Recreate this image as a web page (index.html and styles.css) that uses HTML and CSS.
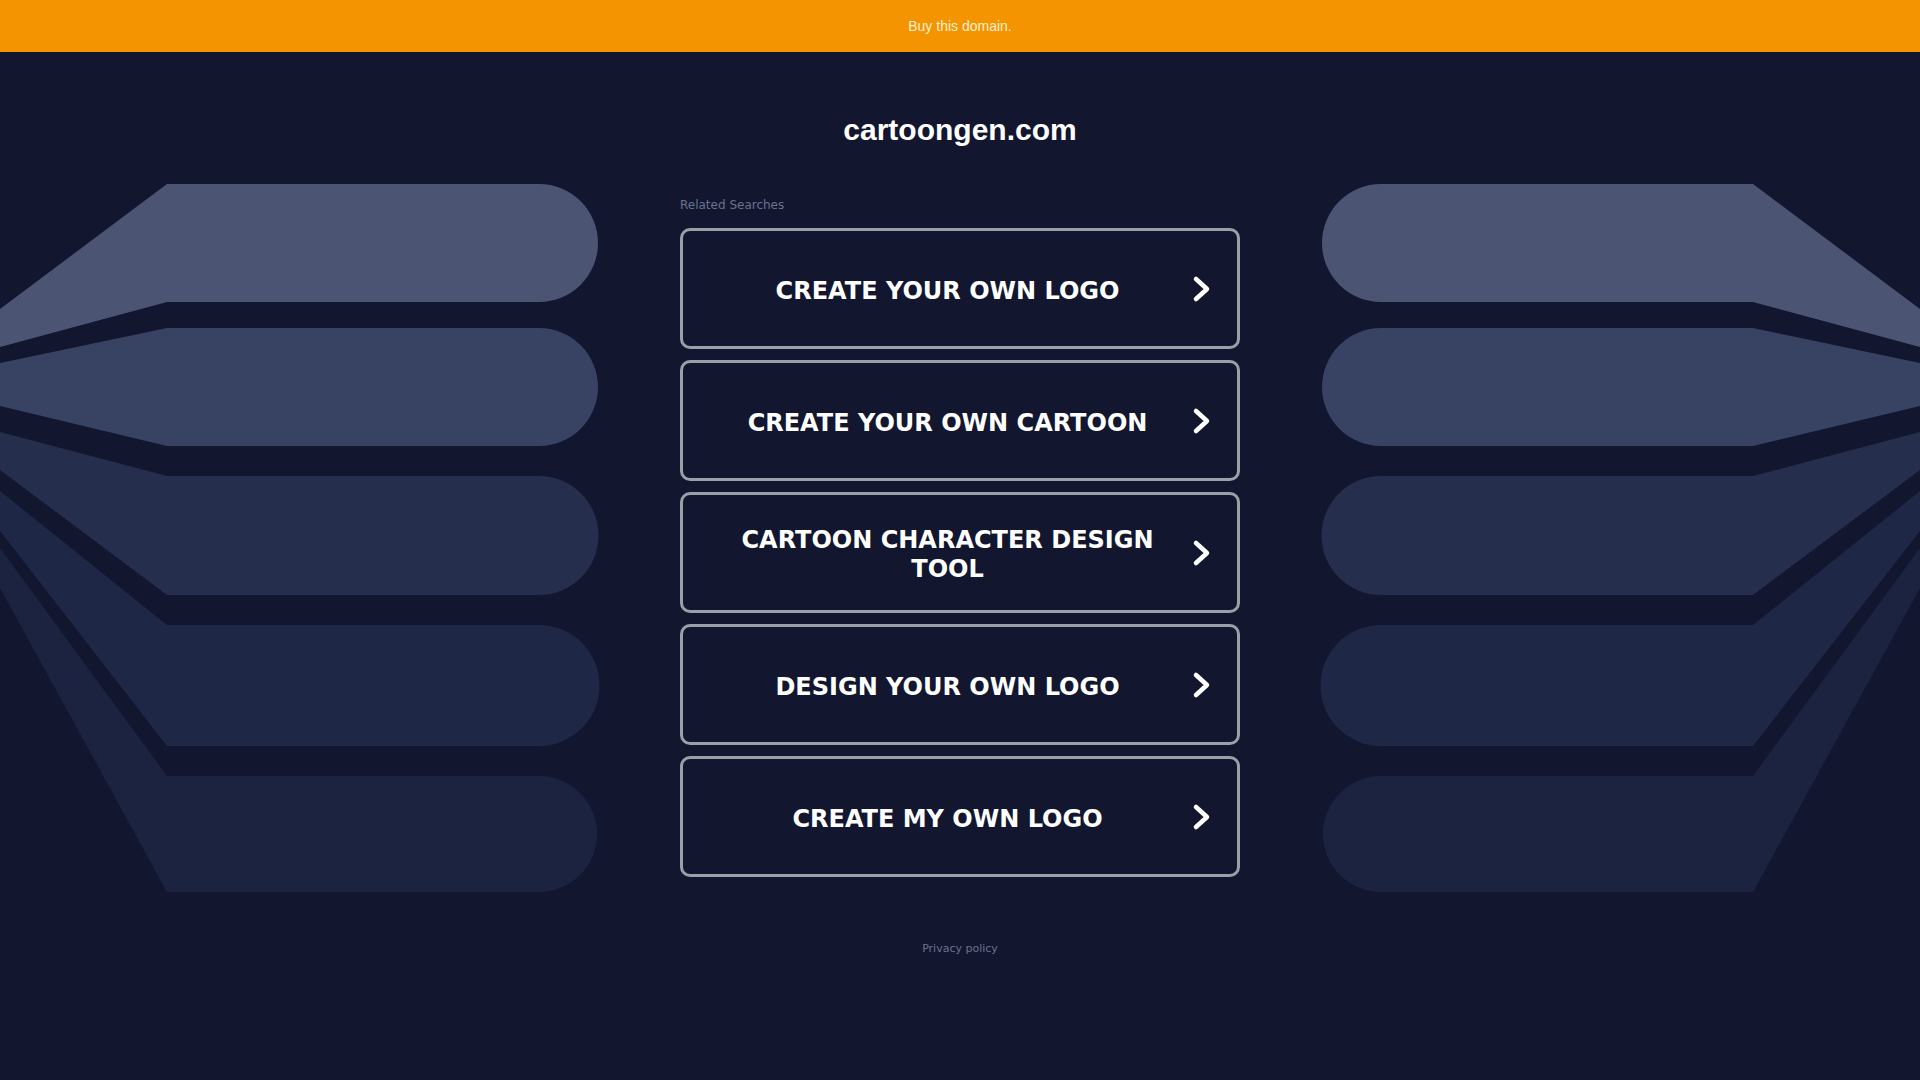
FILE: index.html
```html
<!DOCTYPE html>
<html lang="en">
<head>
    <meta charset="UTF-8">
    <meta name="viewport" content="width=device-width, initial-scale=1.0">
    <title>cartoongen.com</title>
    <link rel="stylesheet" href="styles.css">
</head>
<body>
    <div class="topbar">
        <a href="#">Buy this domain.</a>
    </div>

    <h1 class="domain">cartoongen.com</h1>

    <div class="stage">
        <!-- fan of rounded bars, mirrored on the right -->
        <svg class="fan" viewBox="0 0 600 710" width="600" height="710" aria-hidden="true">
            <path fill="#4b5573" d="M0 125 L167 0 H539 A59 59 0 0 1 539 118 H167 L0 163 Z"/>
            <path fill="#384262" d="M0 179 L167 144 H539 A59 59 0 0 1 539 262 H167 L0 222 Z"/>
            <path fill="#262e4d" d="M0 248 L167 292 H539 A59.5 59.5 0 0 1 539 411 H167 L0 286 Z"/>
            <path fill="#1f2746" d="M0 307 L167 441 H539 A60.5 60.5 0 0 1 539 562 H167 L0 347 Z"/>
            <path fill="#1c2341" d="M0 364 L167 592 H539 A58 58 0 0 1 539 708 H167 L0 404 Z"/>
        </svg>

        <main class="searches">
            <p class="searches-title">Related Searches</p>
            <ul class="search-list">
                <li><a href="#" class="search-link"><span>CREATE YOUR OWN LOGO</span><svg class="chevron" viewBox="0 0 20 28" width="20" height="28"><polyline points="4,4 15,14 4,24"/></svg></a></li>
                <li><a href="#" class="search-link"><span>CREATE YOUR OWN CARTOON</span><svg class="chevron" viewBox="0 0 20 28" width="20" height="28"><polyline points="4,4 15,14 4,24"/></svg></a></li>
                <li><a href="#" class="search-link"><span>CARTOON CHARACTER DESIGN TOOL</span><svg class="chevron" viewBox="0 0 20 28" width="20" height="28"><polyline points="4,4 15,14 4,24"/></svg></a></li>
                <li><a href="#" class="search-link"><span>DESIGN YOUR OWN LOGO</span><svg class="chevron" viewBox="0 0 20 28" width="20" height="28"><polyline points="4,4 15,14 4,24"/></svg></a></li>
                <li><a href="#" class="search-link"><span>CREATE MY OWN LOGO</span><svg class="chevron" viewBox="0 0 20 28" width="20" height="28"><polyline points="4,4 15,14 4,24"/></svg></a></li>
            </ul>
        </main>

        <svg class="fan fan-right" viewBox="0 0 600 710" width="600" height="710" aria-hidden="true">
            <path fill="#4b5573" d="M0 125 L167 0 H539 A59 59 0 0 1 539 118 H167 L0 163 Z"/>
            <path fill="#384262" d="M0 179 L167 144 H539 A59 59 0 0 1 539 262 H167 L0 222 Z"/>
            <path fill="#262e4d" d="M0 248 L167 292 H539 A59.5 59.5 0 0 1 539 411 H167 L0 286 Z"/>
            <path fill="#1f2746" d="M0 307 L167 441 H539 A60.5 60.5 0 0 1 539 562 H167 L0 347 Z"/>
            <path fill="#1c2341" d="M0 364 L167 592 H539 A58 58 0 0 1 539 708 H167 L0 404 Z"/>
        </svg>
    </div>

    <footer class="footer">
        <a href="#">Privacy policy</a>
    </footer>
</body>
</html>
```

FILE: styles.css
```css
body {
    margin: 0;
    background-color: #12172f;
    font-family: 'DejaVu Sans', Verdana, sans-serif;
    min-height: 100vh;
}
a {
    text-decoration: none;
}
.topbar {
    height: 52px;
    background-color: #f39400;
    text-align: center;
    line-height: 52px;
    font-family: 'Liberation Sans', Arial, sans-serif;
    font-size: 14px;
}
.topbar a {
    color: #fdf0d2;
}
.domain {
    margin: 60px 0 36px;
    text-align: center;
    color: #ffffff;
    font-family: 'Liberation Sans', Arial, sans-serif;
    font-size: 30px;
    line-height: 36px;
    font-weight: bold;
}
.stage {
    display: grid;
    grid-template-columns: 680px 560px 680px;
    align-items: start;
}
.fan {
    display: block;
}
.fan-right {
    justify-self: end;
    transform: scaleX(-1);
}
.searches {
    padding-top: 14px;
}
.searches-title {
    margin: 0 0 15px;
    color: #6b7190;
    font-size: 12px;
    line-height: 15px;
}
.search-list {
    list-style: none;
    margin: 0;
    padding: 0;
    display: flex;
    flex-direction: column;
    gap: 11px;
}
.search-link {
    display: flex;
    align-items: center;
    box-sizing: border-box;
    height: 121px;
    padding: 0 25px 0 20px;
    border: 3px solid #9c9ea8;
    border-radius: 10px;
    color: #ffffff;
    font-size: 24px;
    font-weight: bold;
    line-height: 1.2;
}
.search-link span {
    flex: 1;
    padding-top: 5px;
    text-align: center;
}
.chevron {
    flex: none;
    fill: none;
    stroke: #ffffff;
    stroke-width: 4.5;
    stroke-linecap: round;
    stroke-linejoin: round;
}
.search-link:hover {
    border-color: #c4c6cf;
}
.footer {
    margin-top: 48px;
    text-align: center;
    font-size: 11px;
    line-height: 14px;
}
.footer a {
    color: #6b7190;
}
```
